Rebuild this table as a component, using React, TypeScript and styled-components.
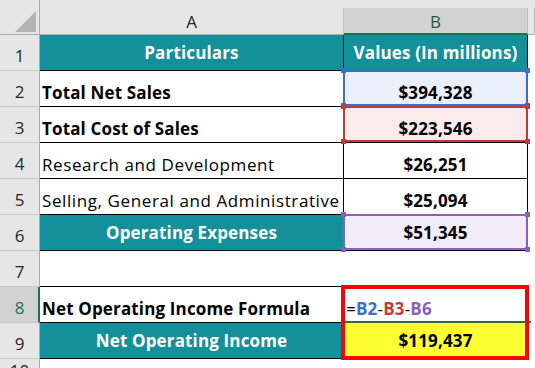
import React from "react";
import styled, { createGlobalStyle, css } from "styled-components";

const TEAL = "#13909a";
const FONT = `"Open Sans", "Lato", sans-serif`;
const GREEN = "#217346";

const Global = createGlobalStyle`
  html, body { margin: 0; padding: 0; background: #fff; }
  body { font-family: ${FONT}; overflow: hidden; }
  * { box-sizing: border-box; }
`;

const Sheet = styled.div`
  width: 535px;
  height: 368px;
  overflow: hidden;
  display: flex;
  flex-direction: column;
  background: #fff;
  color: #000;
  font-size: 17px;
`;

const HeaderRow = styled.div`
  display: flex;
  height: 35px;
  flex: none;
  background: #e6e6e6;
  align-items: flex-end;
`;

const Corner = styled.div`
  position: relative;
  width: 40px;
  height: 35px;
  flex: none;
  border-right: 1px solid #ababab;
  border-bottom: 1px solid #ababab;
  display: flex;
  align-items: flex-end;
  justify-content: flex-end;
  padding: 0 3px 2px 0;
`;

const ColHead = styled.div<{ $w?: number; $active?: boolean }>`
  ${(p) => (p.$w ? `width:${p.$w}px; flex:none;` : "flex:1;")}
  height: 27px;
  display: flex;
  align-items: center;
  justify-content: center;
  padding-top: 1px;
  border-right: 1px solid #bdbdbd;
  border-bottom: 1px solid #ababab;
  color: #262626;
  ${(p) =>
    p.$active &&
    css`
      background: #d2d2d2;
      color: #1f5f3a;
      border-bottom: 2px solid ${GREEN};
    `}
`;

const Row = styled.div<{ $h?: number }>`
  display: flex;
  height: ${(p) => p.$h ?? 36}px;
  flex: none;
`;

const RowHead = styled.div<{ $active?: boolean }>`
  width: 40px;
  flex: none;
  background: #e6e6e6;
  border-right: 1px solid #ababab;
  border-bottom: 1px solid #c8c8c8;
  display: flex;
  align-items: flex-end;
  justify-content: center;
  padding-bottom: 4px;
  line-height: 20px;
  color: #262626;
  ${(p) =>
    p.$active &&
    css`
      background: #d2d2d2;
      color: ${GREEN};
      border-right: 2px solid ${GREEN};
      padding-left: 1px;
    `}
`;

type CellProps = {
  $w?: number;
  $bg?: string;
  $center?: boolean;
  $middle?: boolean;
  $bold?: boolean;
  $light?: boolean;
  $lines?: boolean;
  $under?: boolean;
};

const Cell = styled.div<CellProps>`
  position: relative;
  ${(p) => (p.$w ? `width:${p.$w}px; flex:none;` : "flex:1;")}
  background: ${(p) => p.$bg ?? "#fff"};
  display: flex;
  align-items: ${(p) => (p.$middle ? "center" : "flex-end")};
  justify-content: ${(p) => (p.$center ? "center" : "flex-start")};
  padding: ${(p) => (p.$middle ? "0 2px" : "0 2px 3px 2px")};
  font-weight: ${(p) => (p.$bold ? 700 : 400)};
  letter-spacing: ${(p) => (p.$bold ? "0.15px" : "0.6px")};
  color: ${(p) => (p.$light ? "#fff" : "#000")};
  white-space: nowrap;
  line-height: 20px;
  border-right: ${(p) => (p.$lines ? "1px solid #000" : "none")};
  border-bottom: ${(p) => (p.$lines || p.$under ? "1px solid #000" : "none")};
`;

const RangeBox = styled.span<{ $c: string }>`
  position: absolute;
  top: -1px;
  left: -1px;
  right: -1px;
  bottom: 0;
  border: 2px solid ${(p) => p.$c};
  z-index: 2;
  pointer-events: none;
`;

const Handle = styled.i<{ $c: string; $top?: boolean; $left?: boolean }>`
  position: absolute;
  width: 5px;
  height: 5px;
  background: ${(p) => p.$c};
  ${(p) => (p.$top ? "top:-4px;" : "bottom:-4px;")}
  ${(p) => (p.$left ? "left:-4px;" : "right:-4px;")}
`;

const ActiveLine = styled.span`
  position: absolute;
  left: 1px;
  right: -4px;
  bottom: -1px;
  height: 2px;
  background: ${GREEN};
  z-index: 2;
`;

const RedBox = styled.span`
  position: absolute;
  top: -2px;
  left: -3px;
  right: -2px;
  bottom: -38px;
  border: 4px solid #ff0000;
  z-index: 3;
  pointer-events: none;
`;

const Formula = styled.span`
  letter-spacing: 0.2px;
`;

const Ref = styled.span<{ $c?: string }>`
  color: ${(p) => p.$c ?? "#000"};
  font-weight: ${(p) => (p.$c ? 700 : 400)};
`;

const Filler = styled.div`
  flex: 1;
  background: #fff;
`;

const Range = ({ c }: { c: string }) => (
  <RangeBox $c={c}>
    <Handle $c={c} $top $left />
    <Handle $c={c} $top />
    <Handle $c={c} $left />
    <Handle $c={c} />
  </RangeBox>
);

const BLUE = "#3b6fcc";
const RED = "#c4393c";
const PURPLE = "#8b5fc0";

const A = 304;
const B = 184;

export default function App() {
  return (
    <>
      <Global />
      <Sheet>
        <HeaderRow>
          <Corner>
            <svg width="21" height="21" viewBox="0 0 21 21">
              <polygon points="21,0 21,21 0,21" fill="#b4b4b4" />
            </svg>
          </Corner>
          <ColHead $w={A}>A</ColHead>
          <ColHead $w={B} $active>
            B
          </ColHead>
          <ColHead />
        </HeaderRow>

        <Row>
          <RowHead>1</RowHead>
          <Cell $w={A} $bg={TEAL} $center $middle $bold $light $lines>
            Particulars
          </Cell>
          <Cell $w={B} $bg={TEAL} $center $middle $bold $light $lines>
            Values (In millions)
          </Cell>
          <Filler />
        </Row>

        <Row>
          <RowHead>2</RowHead>
          <Cell $w={A} $bold $lines>
            Total Net Sales
          </Cell>
          <Cell $w={B} $bg="#eaf0fa" $center $bold $lines>
            $394,328
            <Range c={BLUE} />
          </Cell>
          <Filler />
        </Row>

        <Row>
          <RowHead>3</RowHead>
          <Cell $w={A} $bold $lines>
            Total Cost of Sales
          </Cell>
          <Cell $w={B} $bg="#fbeceb" $center $bold $lines>
            $223,546
            <Range c={RED} />
          </Cell>
          <Filler />
        </Row>

        <Row>
          <RowHead>4</RowHead>
          <Cell $w={A} $lines>
            Research and Development
          </Cell>
          <Cell $w={B} $center $bold $lines>
            $26,251
          </Cell>
          <Filler />
        </Row>

        <Row>
          <RowHead>5</RowHead>
          <Cell $w={A} $lines>
            Selling, General and Administrative
          </Cell>
          <Cell $w={B} $center $bold $lines>
            $25,094
          </Cell>
          <Filler />
        </Row>

        <Row>
          <RowHead>6</RowHead>
          <Cell $w={A} $bg={TEAL} $center $middle $bold $light $lines>
            Operating Expenses
          </Cell>
          <Cell $w={B} $bg="#f0ecf8" $center $middle $bold $lines>
            $51,345
            <Range c={PURPLE} />
          </Cell>
          <Filler />
        </Row>

        <Row>
          <RowHead>7</RowHead>
          <Cell $w={A} $under />
          <Cell $w={B} $under />
          <Filler />
        </Row>

        <Row>
          <RowHead $active>8</RowHead>
          <Cell $w={A} $bold $lines>
            Net Operating Income Formula
          </Cell>
          <Cell $w={B} $bold $lines>
            <Formula>
              <Ref>=</Ref>
              <Ref $c={BLUE}>B2</Ref>
              <Ref>-</Ref>
              <Ref $c={RED}>B3</Ref>
              <Ref>-</Ref>
              <Ref $c={PURPLE}>B6</Ref>
            </Formula>
            <ActiveLine />
            <RedBox />
          </Cell>
          <Filler />
        </Row>

        <Row>
          <RowHead>9</RowHead>
          <Cell $w={A} $bg={TEAL} $center $middle $bold $light $lines>
            Net Operating Income
          </Cell>
          <Cell $w={B} $bg="#ffff33" $center $middle $bold $lines>
            $119,437
          </Cell>
          <Filler />
        </Row>

        <Row $h={27}>
          <RowHead>10</RowHead>
          <Cell $w={A} />
          <Cell $w={B} />
          <Filler />
        </Row>
      </Sheet>
    </>
  );
}
